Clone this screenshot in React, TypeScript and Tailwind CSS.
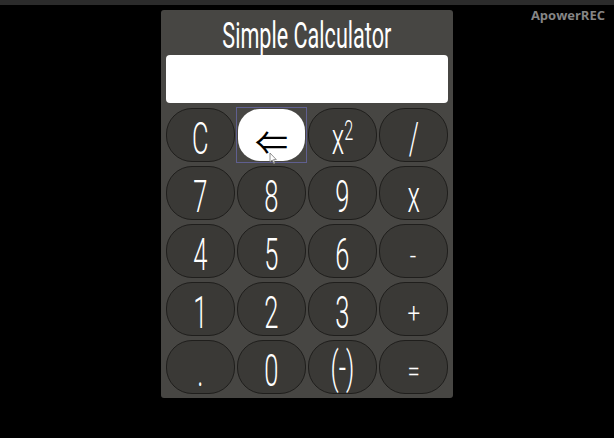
import React from 'react';

const keys: string[][] = [
    ['C', '⇐', 'x²', '/'],
    ['7', '8', '9', 'x'],
    ['4', '5', '6', '-'],
    ['1', '2', '3', '+'],
    ['.', '0', '(-)', '='],
];

const small = ['+', '=', '-'];

function Key({ label }: { label: string }) {
    if (label === '⇐') {
        return (
            <div className="h-[54px] outline outline-1 outline-[#5f5f8f] flex p-[1px] relative">
                <button className="flex-1 rounded-[22px] bg-white text-black flex items-end justify-center pb-[3px] text-[33px] leading-none font-['Noto_Sans_CJK_SC','DejaVu_Sans',sans-serif] font-normal">
                    <span className="inline-block">{label}</span>
                </button>
                {/* mouse pointer */}
                <svg className="absolute left-[32px] top-[44px]" width="8" height="12" viewBox="0 0 8 12">
                    <path d="M1 1 L1 10 L3.2 8 L4.8 11.5 L6 11 L4.5 7.6 L7.3 7.6 Z" fill="#fff" stroke="#777" strokeWidth="0.8" />
                </svg>
            </div>
        );
    }
    let content: React.ReactNode = label;
    if (label === 'x²') {
        content = (
            <>
                x<span className="text-[28px] relative -top-[14px]">2</span>
            </>
        );
    }
    const isSmall = small.includes(label);
    let cls = 'inline-block scale-x-[0.58] text-[44px] leading-none font-light mt-[7px]';
    if (isSmall) cls = 'inline-block scale-x-[0.8] text-[28px] leading-none font-light mt-[10px]';
    if (label === '(-)') cls = 'inline-block scale-x-[0.58] text-[44px] leading-none font-light mt-[2px]';
    return (
        <button className="h-[54px] rounded-[26px] border border-[#1f1e1c] bg-[#3a3936] text-white flex items-center justify-center">
            <span className={cls}>{content}</span>
        </button>
    );
}

export default function App() {
    return (
        <div className="w-[614px] h-[438px] bg-black relative overflow-hidden font-['Roboto',sans-serif]">
            {/* browser chrome strip */}
            <div className="h-[5px] bg-[#2b2b2b]" />
            <div className="absolute right-[9px] top-[6px] text-[13px] font-bold text-[#858585] font-['Open_Sans',sans-serif]">
                ApowerREC
            </div>

            <div className="mx-auto mt-[5px] w-[292px] h-[388px] bg-[#474643] rounded-[3px] px-[5px] pt-[4px] flex flex-col">
                <h1 className="h-[38px] text-center text-white text-[36px] leading-[38px] font-normal">
                    <span className="inline-block scale-x-[0.6] relative top-[3px]">Simple Calculator</span>
                </h1>
                <div className="mt-[3px] h-[48px] bg-white rounded-[4px]" />
                <div className="mt-[5px] grid grid-cols-4 gap-x-[2px] gap-y-[4px]">
                    {keys.flat().map((k, i) => (
                        <Key key={i} label={k} />
                    ))}
                </div>
            </div>
        </div>
    );
}
